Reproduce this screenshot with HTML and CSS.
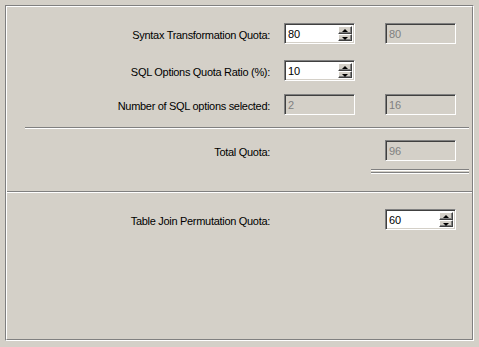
FILE: index.html
```html
<!DOCTYPE html>
<html lang="en">
<head>
  <meta charset="UTF-8">
  <title>Quota Settings</title>
  <link rel="stylesheet" href="styles.css">
</head>
<body>

  <div class="frame">
    <div class="frame-in">

      <div class="section top">
        <div class="row first">
          <label>Syntax Transformation Quota:</label>
          <div class="spin"><input type="text" value="80"><div class="spin-btns"><span class="up"></span><span class="down"></span></div></div>
          <input class="box off col3" type="text" value="80" disabled>
        </div>
        <div class="row second">
          <label>SQL Options Quota Ratio (%):</label>
          <div class="spin"><input type="text" value="10"><div class="spin-btns"><span class="up"></span><span class="down"></span></div></div>
        </div>
        <div class="row third">
          <label>Number of SQL options selected:</label>
          <input class="box off" type="text" value="2" disabled>
          <input class="box off col3" type="text" value="16" disabled>
        </div>

        <div class="sep"></div>

        <div class="row total">
          <label>Total Quota:</label>
          <input class="box off col3" type="text" value="96" disabled>
        </div>
        <div class="double-sep">
          <div class="etch"></div>
          <div class="etch"></div>
        </div>
      </div>

      <div class="divider"></div>

      <div class="section bottom">
        <div class="row join">
          <label>Table Join Permutation Quota:</label>
          <div class="spin col3"><input type="text" value="60"><div class="spin-btns"><span class="up"></span><span class="down"></span></div></div>
        </div>
      </div>

    </div>
  </div>

</body>
</html>
```

FILE: styles.css
```css
body {
  margin: 0;
  background-color: #d4d0c8;
  font-family: "Liberation Sans", Arial, sans-serif;
  font-size: 11px;
  color: #000;
}
.frame {
  margin: 5px;
  width: 469px;
  height: 336px;
  box-sizing: border-box;
  border-top: 1px solid #808080;
  border-left: 1px solid #808080;
  border-right: 1px solid #fff;
  border-bottom: 1px solid #fff;
}
.frame-in {
  height: 100%;
  box-sizing: border-box;
  border-top: 1px solid #fff;
  border-left: 1px solid #fff;
  border-right: 1px solid #808080;
  border-bottom: 1px solid #808080;
}
.section.top {
  padding-top: 16px;
}
.row {
  display: grid;
  grid-template-columns: 277px 101px 71px;
  align-items: center;
  height: 21px;
}
.row label {
  text-align: right;
  padding: 2px 14px 0 0;
  letter-spacing: -0.3px;
}
.row .col3 {
  grid-column: 3;
}
.row.second { margin-top: 16px; }
.row.third { margin-top: 13px; }
.row.total { margin-top: 11px; }
.section.bottom {
  padding-top: 16px;
}

/* sunken edit boxes */
.box,
.spin {
  box-sizing: border-box;
  width: 71px;
  height: 21px;
  border-top: 1px solid #808080;
  border-left: 1px solid #808080;
  border-right: 1px solid #fff;
  border-bottom: 1px solid #fff;
  box-shadow: inset 1px 1px 0 #404040, inset -1px -1px 0 #d4d0c8;
}
.box {
  margin: 0;
  padding: 1px 0 0 3px;
  font-family: inherit;
  font-size: 11px;
  background: #d4d0c8;
  color: #808080;
  outline: none;
}
.spin {
  display: flex;
  align-items: stretch;
  background: #fff;
  padding: 2px 2px 2px 1px;
}
.spin input {
  flex: 1;
  min-width: 0;
  border: none;
  margin: 0;
  padding: 0 0 0 2px;
  font-family: inherit;
  font-size: 11px;
  color: #000;
  background: transparent;
  outline: none;
}
.spin-btns {
  width: 14px;
  display: flex;
  flex-direction: column;
}
.spin-btns span {
  flex: 1;
  position: relative;
  background: #d4d0c8;
  box-sizing: border-box;
  border-top: 1px solid #fff;
  border-left: 1px solid #fff;
  border-right: 1px solid #404040;
  border-bottom: 1px solid #404040;
  box-shadow: inset -1px -1px 0 #808080;
}
.spin-btns span::after {
  content: "";
  position: absolute;
  left: 3px;
  top: 2px;
  border-left: 3px solid transparent;
  border-right: 3px solid transparent;
}
.spin-btns .up::after {
  border-bottom: 3px solid #000;
}
.spin-btns .down::after {
  border-top: 3px solid #000;
}

/* etched lines */
.sep {
  margin: 12px 3px 0 18px;
  height: 0;
  border-top: 1px solid #808080;
  border-bottom: 1px solid #fff;
}
.double-sep {
  margin: 8px 3px 0 364px;
  display: flex;
  flex-direction: column;
  gap: 1px;
}
.etch {
  height: 0;
  border-top: 1px solid #808080;
  border-bottom: 1px solid #fff;
}
.divider {
  margin-top: 17px;
  height: 0;
  border-top: 1px solid #808080;
  border-bottom: 1px solid #fff;
}
```
